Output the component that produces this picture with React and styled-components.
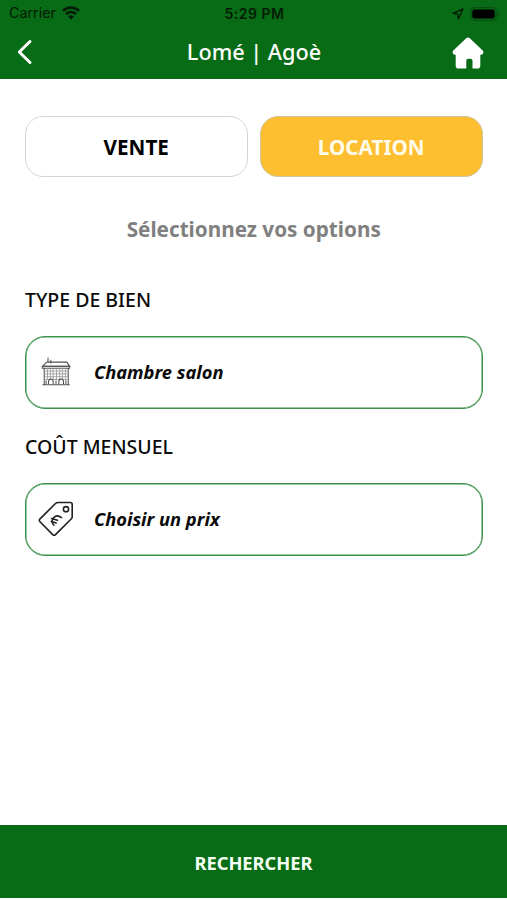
import React from 'react';
import styled, { createGlobalStyle, css } from 'styled-components';

const GlobalStyle = createGlobalStyle`
    * {
        box-sizing: border-box;
    }
    body {
        margin: 0;
        background-color: #ffffff;
    }
    button {
        font-family: inherit;
        cursor: pointer;
    }
`;

const GREEN = '#086b15';

const Screen = styled.div`
    display: flex;
    flex-direction: column;
    height: 900px;
    padding-bottom: 2px;
    font-family: 'Noto Sans', 'Open Sans', sans-serif;
    color: #0a0a0a;
`;

const Header = styled.header`
    height: 79px;
    background-color: ${GREEN};
`;

const StatusBar = styled.div`
    display: grid;
    grid-template-columns: 1fr auto 1fr;
    align-items: center;
    height: 27px;
    padding: 0 7px 0 9px;
    font-family: Inter, Roboto, sans-serif;
    font-size: 14.3px;
    line-height: 25px;
    color: #041c07;
`;

const StatusSide = styled.div`
    display: flex;
    align-items: center;
    justify-content: ${(props) => (props.$end ? 'flex-end' : 'flex-start')};
    gap: 6px;
    padding-bottom: ${(props) => (props.$end ? 0 : 2)}px;
`;

const Clock = styled.span`
    font-size: 14px;
    font-weight: 600;
    letter-spacing: 0.5px;
`;

const NavBar = styled.div`
    display: grid;
    grid-template-columns: 1fr auto 1fr;
    align-items: center;
    height: 52px;
    padding: 0 23px 2px 16px;
`;

const Title = styled.h1`
    margin: 0 0 0 8px;
    font-size: 21.7px;
    font-weight: 500;
    line-height: 30px;
    color: #ffffff;
`;

const NavButton = styled.button`
    display: flex;
    justify-self: ${(props) => (props.$end ? 'end' : 'start')};
    padding: ${(props) => (props.$end ? '2px 0 0' : '0')};
    border: none;
    background: none;
`;

const Main = styled.main`
    flex: 1;
    padding: 37px 24.5px 0 25px;
`;

const Tabs = styled.div`
    display: grid;
    grid-template-columns: 1fr 1fr;
    gap: 12.5px;
`;

const Tab = styled.button`
    height: 61px;
    padding: 1px 0 0;
    border: 1px solid #d4d4d4;
    border-radius: 18px;
    background-color: #ffffff;
    font-size: 20.7px;
    font-weight: 700;
    color: #000000;
    ${(props) =>
        props.$active &&
        css`
            border-color: #cfc4a4;
            background-color: #fdbf2f;
            color: #fffbea;
        `}
`;

const Hint = styled.p`
    margin: 37px 0 0;
    font-size: 20.7px;
    font-weight: 700;
    line-height: 30px;
    text-align: center;
    color: #808080;
`;

const Label = styled.h2`
    margin: ${(props) => props.$top}px 0 21px;
    font-size: 19.5px;
    font-weight: 500;
    line-height: 30px;
`;

const Select = styled.button`
    display: flex;
    align-items: center;
    width: 100%;
    height: 73px;
    padding: 0 12px 2px;
    border: 1px solid #3c914b;
    border-radius: 20px;
    box-shadow: inset 0 0 0 0.5px #3c914b;
    background-color: #ffffff;
`;

const SelectIcon = styled.span`
    display: flex;
    width: 56px;
    padding-left: ${(props) => props.$inset || 0}px;
`;

const SelectValue = styled.span`
    font-size: 18.3px;
    font-style: italic;
    font-weight: 700;
    color: #0a0a0a;
`;

const Submit = styled.button`
    height: 73px;
    padding: 2px 0 0;
    border: none;
    background-color: ${GREEN};
    font-size: 18.3px;
    font-weight: 700;
    color: #f4fff4;
`;

const WifiIcon = () => (
    <svg width="18" height="14" viewBox="0 0 18 14" fill="none" stroke="currentColor" strokeWidth="2.5">
        <path d="M1 4.9a11.4 11.4 0 0 1 16 0" />
        <path d="M4 8a7.1 7.1 0 0 1 10 0" />
        <path d="M9 13.6 6.2 10.7a4 4 0 0 1 5.6 0z" fill="currentColor" stroke="none" />
    </svg>
);

const LocationIcon = () => (
    <svg width="12" height="12" viewBox="0 0 12 12" fill="none" stroke="currentColor" strokeWidth="1.4" strokeLinejoin="round">
        <path d="M11 1 1 5.3l4.7.8.7 4.6z" />
    </svg>
);

const BatteryIcon = () => (
    <svg width="30" height="14" viewBox="0 0 30 14">
        <rect x="0.7" y="0.7" width="25.4" height="12.6" rx="3.6" fill="none" stroke="#065011" strokeWidth="1.2" />
        <rect x="2.3" y="2.5" width="22.3" height="9" rx="2" fill="#000000" />
        <path d="M27.3 4.7q2 .8 2 2.3t-2 2.3z" fill="#065011" />
    </svg>
);

const BackIcon = () => (
    <svg width="17" height="26" viewBox="0 0 17 26" fill="none" stroke="#ffffff" strokeWidth="3" strokeLinecap="round" strokeLinejoin="round">
        <path d="M14 2.5 3.3 13 14 23.5" />
    </svg>
);

const HomeIcon = () => (
    <svg width="32" height="32" viewBox="0 0 32 32">
        <path
            d="M14.2 1.2q1.8-1.3 3.6 0L30.7 13.5q1 1.2.6 2.6-.5 1.6-2.3 1.6h-.7v11q0 2.8-2.8 2.8h-5V23.6q0-1.9-1.9-1.9h-2.4q-1.9 0-1.9 1.9v7.9H6.5q-2.8 0-2.8-2.8v-11H3q-1.8 0-2.3-1.6-.4-1.4.6-2.6z"
            fill="#ffffff"
        />
    </svg>
);

const BuildingIcon = () => (
    <svg width="32" height="32" viewBox="0 0 34 34" fill="none" stroke="#505050" strokeWidth="1.1">
        <path d="M8.5 7V1.5M11.5 8V4M7.5 6.5h21l3 4.5H3L6.5 7z" />
        <path d="M2.5 11h29v2h-29zM4.5 13v17M30 13v17M2.5 30.5h29" />
        <path d="M8 13v12M11 13v12M14 13v12M17.5 13v12M21 13v12M24 13v12M27 13v12M5 16h25M5 19h25M5 22h25M5 25h25" stroke="#999999" strokeWidth="0.9" />
        <path d="M9 30v-2.5q0-3 2.5-3t2.5 3V30M20 30v-2.5q0-3 2.5-3t2.5 3V30M6.5 26v4M17 26v4M27.5 26v4" />
    </svg>
);

const PriceTagIcon = () => (
    <svg width="36" height="36" viewBox="0 0 36 36" fill="none" stroke="#222222" strokeWidth="1.6" strokeLinecap="round" strokeLinejoin="round">
        <path d="M20 1.5h12.5q1.7 0 1.7 1.7v12.5q0 1.2-.8 2L17.5 33.6q-1.4 1.3-2.8 0L2 20.7q-1.4-1.4 0-2.8L17.5 2.5q1-1 2.5-1z" />
        <circle cx="28" cy="8.2" r="2.6" />
        <path d="M23.5 16.6q-4.5-3.500-8 .2-3.200 4 .5 7.400M13.500 17.500l6 1.700M13.200 20.500l5 1.500" strokeWidth="1.5" />
    </svg>
);

const App = () => (
    <>
        <GlobalStyle />
        <Screen>
            <Header>
                <StatusBar>
                    <StatusSide>
                        Carrier
                        <WifiIcon />
                    </StatusSide>
                    <Clock>5:29 PM</Clock>
                    <StatusSide $end>
                        <LocationIcon />
                        <BatteryIcon />
                    </StatusSide>
                </StatusBar>
                <NavBar>
                    <NavButton aria-label="Retour">
                        <BackIcon />
                    </NavButton>
                    <Title>Lomé | Agoè</Title>
                    <NavButton $end aria-label="Accueil">
                        <HomeIcon />
                    </NavButton>
                </NavBar>
            </Header>
            <Main>
                <Tabs>
                    <Tab>VENTE</Tab>
                    <Tab $active>LOCATION</Tab>
                </Tabs>
                <Hint>Sélectionnez vos options</Hint>
                <Label $top={41}>TYPE DE BIEN</Label>
                <Select>
                    <SelectIcon $inset={2}>
                        <BuildingIcon />
                    </SelectIcon>
                    <SelectValue>Chambre salon</SelectValue>
                </Select>
                <Label $top={23}>COÛT MENSUEL</Label>
                <Select>
                    <SelectIcon>
                        <PriceTagIcon />
                    </SelectIcon>
                    <SelectValue>Choisir un prix</SelectValue>
                </Select>
            </Main>
            <Submit>RECHERCHER</Submit>
        </Screen>
    </>
);

export default App;
